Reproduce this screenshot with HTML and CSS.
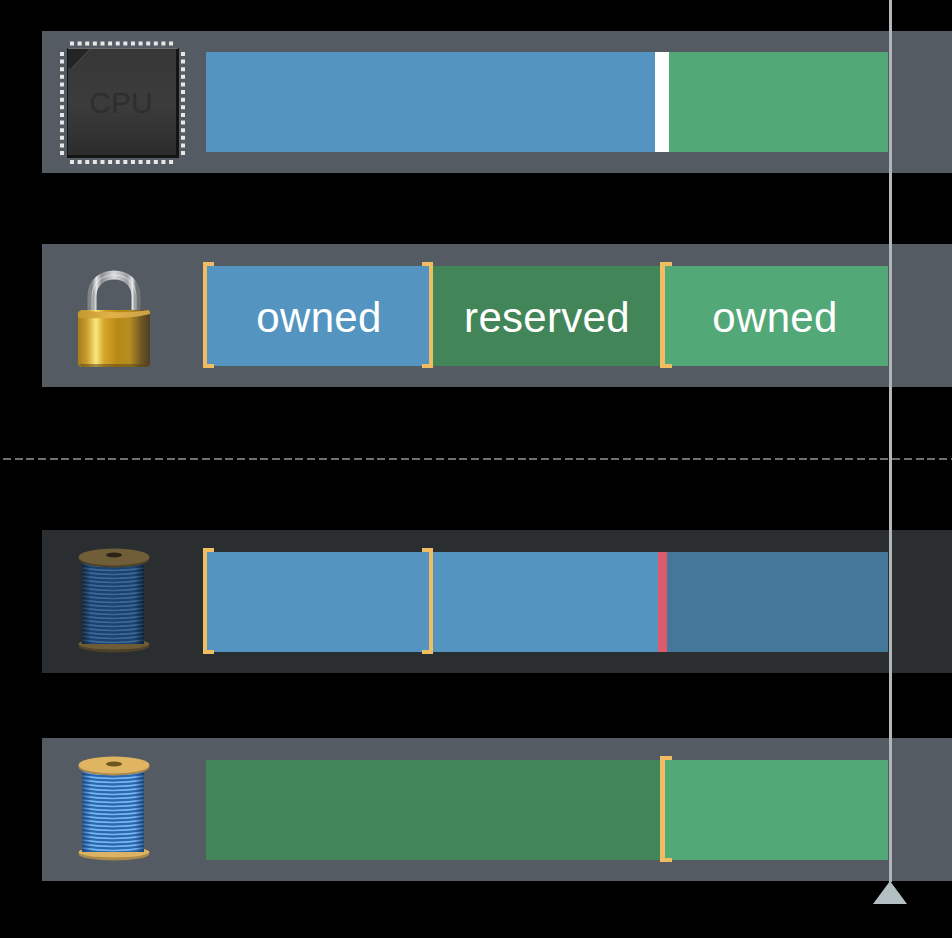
FILE: index.html
```html
<!DOCTYPE html>
<html lang="en">
<head>
<meta charset="utf-8">
<title>Ownership timeline</title>
<link rel="stylesheet" href="styles.css">
</head>
<body>
<main class="stage">
  <section class="row row-first">
    <div class="icon-cell">
      <svg class="icon" viewBox="0 0 164 142" aria-hidden="true">
        <defs>
          <linearGradient id="chip" x1="0" y1="0" x2="0" y2="1">
            <stop offset="0" stop-color="#363636"/>
            <stop offset="0.5" stop-color="#3c3c3c"/>
            <stop offset="1" stop-color="#2c2c2c"/>
          </linearGradient>
        </defs>
        <g stroke="#e8e8e8" stroke-width="4" fill="none" stroke-dasharray="4 3.62">
          <line x1="28" y1="12.5" x2="134" y2="12.5"/>
          <line x1="28" y1="131" x2="134" y2="131"/>
          <line x1="20" y1="21" x2="20" y2="127"/>
          <line x1="141" y1="21" x2="141" y2="127"/>
        </g>
        <rect x="25" y="17" width="112" height="110" fill="#141414"/>
        <rect x="26" y="18" width="108" height="106" fill="url(#chip)"/>
        <path d="M26 18 H48 L30 37 H26 Z" fill="#242424"/>
        <path d="M48 18 L30 37" stroke="#505050" stroke-width="1" fill="none"/>
        <line x1="26" y1="17.5" x2="136" y2="17.5" stroke="#6e6e6e" stroke-width="1"/>
        <text x="79" y="82" class="cpu-label">CPU</text>
      </svg>
    </div>
    <div class="bar">
      <div class="seg blue" style="width:449px"></div>
      <div class="seg white" style="width:14px"></div>
      <div class="seg green grow"></div>
    </div>
  </section>

  <section class="row row-lock">
    <div class="icon-cell">
      <svg class="icon" viewBox="0 0 164 143" aria-hidden="true">
        <defs>
          <linearGradient id="shackle" x1="0" y1="0" x2="1" y2="0">
            <stop offset="0" stop-color="#7f8487"/>
            <stop offset="0.1" stop-color="#e4e6e8"/>
            <stop offset="0.22" stop-color="#8b8f92"/>
            <stop offset="0.5" stop-color="#d8dadc"/>
            <stop offset="0.8" stop-color="#9a9ea1"/>
            <stop offset="0.92" stop-color="#e4e6e8"/>
            <stop offset="1" stop-color="#6f7376"/>
          </linearGradient>
          <linearGradient id="brass" x1="0" y1="0" x2="1" y2="0">
            <stop offset="0" stop-color="#a67c1c"/>
            <stop offset="0.12" stop-color="#c89b2c"/>
            <stop offset="0.25" stop-color="#fbe77e"/>
            <stop offset="0.36" stop-color="#d6a62c"/>
            <stop offset="0.55" stop-color="#b88a14"/>
            <stop offset="0.72" stop-color="#b58d24"/>
            <stop offset="0.88" stop-color="#6e5624"/>
            <stop offset="1" stop-color="#4e3f22"/>
          </linearGradient>
          <linearGradient id="lip" x1="0" y1="0" x2="1" y2="0">
            <stop offset="0" stop-color="#c4982f"/>
            <stop offset="0.45" stop-color="#e2b248"/>
            <stop offset="1" stop-color="#caa044"/>
          </linearGradient>
        </defs>
        <path d="M50 70 V52 C50 24 94 24 94 52 V70" fill="none" stroke="url(#shackle)" stroke-width="9"/>
        <path d="M50 70 V52 C50 24 94 24 94 52 V70" fill="none" stroke="#f4f5f6" stroke-width="1" opacity="0.55"/>
        <path d="M36 70 C36 67 38 67 40 66 H106 C108 67 108 67 108 70 V119 C108 122 106 123 103 123 H41 C38 123 36 122 36 119 Z" fill="url(#brass)"/>
        <path d="M36 70 C36 67 38 67 40 66 C60 69 90 69 106 66 C108 67 108 67 108 70 C92 74 76 75 36 74 Z" fill="url(#lip)"/>
        <path d="M37 120 H107 L105 123 H40 Z" fill="#5b4718" opacity="0.55"/>
      </svg>
    </div>
    <div class="bar">
      <div class="seg blue label" style="width:226px">owned<span class="bracket open"></span><span class="bracket close"></span></div>
      <div class="seg forest label" style="width:230px">reserved</div>
      <div class="seg green label grow">owned<span class="bracket open inner"></span></div>
    </div>
  </section>

  <div class="divider"></div>

  <section class="row row-dim">
    <div class="icon-cell">
      <svg class="icon" viewBox="0 0 164 143" aria-hidden="true">
        <defs>
          <linearGradient id="shade-dim" x1="0" y1="0" x2="1" y2="0">
            <stop offset="0" stop-color="#000" stop-opacity="0.45"/>
            <stop offset="0.15" stop-color="#000" stop-opacity="0"/>
            <stop offset="0.85" stop-color="#000" stop-opacity="0"/>
            <stop offset="1" stop-color="#000" stop-opacity="0.5"/>
          </linearGradient>
        </defs>
        <ellipse cx="72" cy="116" rx="35.5" ry="6.5" fill="#4d4128"/>
        <ellipse cx="72" cy="114" rx="35.5" ry="5.5" fill="#6d5c36"/>
        <rect x="40" y="28" width="62" height="86" fill="#1d426f"/>
        <path class="stripes stripes-dim" d="M40 34q31 5 62 0M40 38q31 5 62 0M40 42q31 5 62 0M40 46q31 5 62 0M40 50q31 5 62 0M40 54q31 5 62 0M40 58q31 5 62 0M40 62q31 5 62 0M40 66q31 5 62 0M40 70q31 5 62 0M40 74q31 5 62 0M40 78q31 5 62 0M40 82q31 5 62 0M40 86q31 5 62 0M40 90q31 5 62 0M40 94q31 5 62 0M40 98q31 5 62 0M40 102q31 5 62 0M40 106q31 5 62 0M40 110q31 5 62 0"/>
        <rect x="40" y="28" width="62" height="86" fill="url(#shade-dim)"/>
        <ellipse cx="72" cy="29" rx="35.5" ry="8.5" fill="#4d4128"/>
        <ellipse cx="72" cy="27" rx="35.5" ry="8.5" fill="#6f5e38"/>
        <ellipse cx="72" cy="25" rx="8" ry="2.4" fill="#2b2414"/>
      </svg>
    </div>
    <div class="bar">
      <div class="seg blue" style="width:226px"><span class="bracket open"></span><span class="bracket close"></span></div>
      <div class="seg blue" style="width:226px"></div>
      <div class="seg red" style="width:9px"></div>
      <div class="seg steel grow"></div>
    </div>
  </section>

  <section class="row row-last">
    <div class="icon-cell">
      <svg class="icon" viewBox="0 0 164 143" aria-hidden="true">
        <defs>
          <linearGradient id="shade-lit" x1="0" y1="0" x2="1" y2="0">
            <stop offset="0" stop-color="#0a2a58" stop-opacity="0.55"/>
            <stop offset="0.15" stop-color="#0a2a58" stop-opacity="0"/>
            <stop offset="0.85" stop-color="#0a2a58" stop-opacity="0"/>
            <stop offset="1" stop-color="#0a2a58" stop-opacity="0.6"/>
          </linearGradient>
        </defs>
        <ellipse cx="72" cy="116" rx="35.5" ry="6.5" fill="#a98a4c"/>
        <ellipse cx="72" cy="114" rx="35.5" ry="5.5" fill="#dcb362"/>
        <rect x="40" y="28" width="62" height="86" fill="#2c68b2"/>
        <path class="stripes stripes-lit" d="M40 34q31 5 62 0M40 38q31 5 62 0M40 42q31 5 62 0M40 46q31 5 62 0M40 50q31 5 62 0M40 54q31 5 62 0M40 58q31 5 62 0M40 62q31 5 62 0M40 66q31 5 62 0M40 70q31 5 62 0M40 74q31 5 62 0M40 78q31 5 62 0M40 82q31 5 62 0M40 86q31 5 62 0M40 90q31 5 62 0M40 94q31 5 62 0M40 98q31 5 62 0M40 102q31 5 62 0M40 106q31 5 62 0M40 110q31 5 62 0"/>
        <rect x="40" y="28" width="62" height="86" fill="url(#shade-lit)"/>
        <ellipse cx="72" cy="29" rx="35.5" ry="8.5" fill="#a98a4c"/>
        <ellipse cx="72" cy="27" rx="35.5" ry="8.5" fill="#dfb562"/>
        <ellipse cx="72" cy="26" rx="8" ry="2.4" fill="#6f5522"/>
      </svg>
    </div>
    <div class="bar">
      <div class="seg forest" style="width:456px"></div>
      <div class="seg green grow"><span class="bracket open inner"></span></div>
    </div>
  </section>

  <div class="playhead"></div>
  <div class="playhead-tip"></div>
</main>
</body>
</html>
```

FILE: styles.css
```css
* { box-sizing: border-box; }

html, body {
  margin: 0;
  height: 100%;
  background: #000;
  overflow: hidden;
}

.stage {
  position: relative;
  width: 952px;
  height: 938px;
  padding: 31px 0 0 42px;
  font-family: "Liberation Sans", Arial, sans-serif;
}

.row {
  display: flex;
  height: 143px;
  padding: 22px 64px 21px 0;
  background: #545b62;
}

.row-first {
  height: 142px;
  padding-top: 21px;
}

.row-lock { margin-top: 71px; }
.row-last { margin-top: 65px; }
.row-dim { background: #2a2e30; }

.icon-cell {
  position: relative;
  flex: 0 0 164px;
}

.icon {
  position: absolute;
  left: 0;
  top: -22px;
  width: 164px;
  height: 143px;
  overflow: visible;
}

.row-first .icon {
  top: -21px;
  height: 142px;
}

.cpu-label {
  font-family: "Liberation Sans", Arial, sans-serif;
  font-size: 30px;
  fill: #2e2e2e;
  text-anchor: middle;
}

.stripes {
  fill: none;
  stroke-width: 1.5;
}

.stripes-dim { stroke: #3a6b99; }
.stripes-lit { stroke: #78b8f0; }

.bar {
  display: flex;
  flex: 1;
  height: 100px;
}

.seg {
  position: relative;
  flex: none;
  height: 100%;
}

.grow { flex: 1; }

.blue { background: #5395c0; }
.green { background: #52a877; }
.forest { background: #428558; }
.steel { background: #44789b; }
.red { background: #dc5b6b; }
.white { background: #fff; }

.label {
  display: flex;
  align-items: center;
  justify-content: center;
  padding-top: 3px;
  color: #fff;
  font-size: 42px;
  letter-spacing: 0.3px;
}

.bracket {
  position: absolute;
  z-index: 1;
  top: -4px;
  bottom: -2px;
  width: 11px;
  border: solid #f0bd62;
  border-width: 4px 0;
}

.bracket.open {
  left: -3px;
  border-left-width: 4px;
}

.bracket.open.inner {
  left: -2px;
  width: 12px;
  border-left-width: 5px;
}

.bracket.close {
  right: -1px;
  border-right-width: 4px;
}

.divider {
  height: 2px;
  margin: 71px 0 70px -39px;
  background: repeating-linear-gradient(90deg, #707070 0 8px, transparent 8px 11.7px);
}

.playhead {
  position: absolute;
  left: 889px;
  top: 0;
  width: 3px;
  height: 882px;
  background: #b1b6bb;
}

.playhead-tip {
  position: absolute;
  left: 873px;
  top: 881px;
  width: 0;
  height: 0;
  border-left: 17px solid transparent;
  border-right: 17px solid transparent;
  border-bottom: 23px solid #b4bfc4;
}
```
